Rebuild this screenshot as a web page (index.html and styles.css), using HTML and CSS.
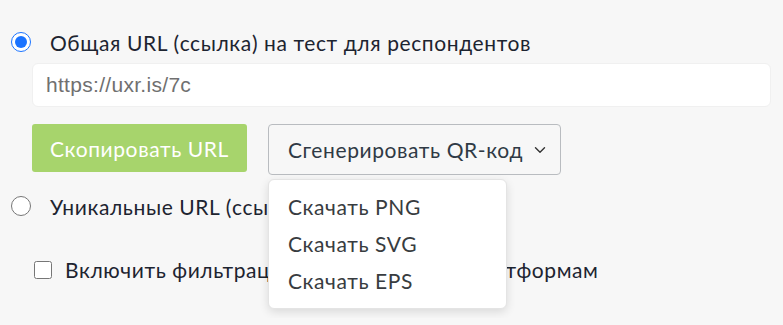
FILE: index.html
```html
<!DOCTYPE html>
<html lang="ru">
<head>
  <meta charset="UTF-8" />
  <title>Ссылка на тест</title>
  <link rel="stylesheet" href="styles.css">
</head>
<body>
<div class="share">
  <label class="option">
    <input type="radio" name="urlType" checked>
    <span>Общая URL (ссылка) на тест для респондентов</span>
  </label>
  <div class="url-block">
    <input class="url-input" type="text" value="https://uxr.is/7c" readonly>
    <div class="actions">
      <button class="btn-copy">Скопировать URL</button>
      <div class="qr">
        <button class="btn-qr">Сгенерировать QR-код
          <svg class="chevron" width="12" height="8" viewBox="0 0 12 8"><path d="M1.5 1.8 6 6.2l4.5-4.4" fill="none" stroke="#333" stroke-width="1.4" stroke-linecap="round" stroke-linejoin="round"/></svg>
        </button>
        <div class="qr-menu">
          <div class="qr-item">Скачать PNG</div>
          <div class="qr-item">Скачать SVG</div>
          <div class="qr-item">Скачать EPS</div>
        </div>
      </div>
    </div>
  </div>
  <label class="option option-second">
    <input type="radio" name="urlType">
    <span>Уникальные URL (ссылки)</span>
  </label>
  <label class="filter">
    <input type="checkbox">
    <span>Включить фильтрацию по браузерам и платформам</span>
  </label>
</div>
</body>
</html>
```
FILE: styles.css
```css
body {
  margin: 0;
  background-color: #f7f7f7;
  font-family: Lato, "Noto Sans", sans-serif;
  color: #1d2430;
}
.share {
  padding: 32px 12px 36px 11px;
}
.option {
  display: flex;
  align-items: center;
  gap: 19px;
  font-size: 21px;
  letter-spacing: 0.6px;
  height: 20px;
}
.option input {
  width: 20px;
  height: 20px;
  margin: 0;
  accent-color: #1a73ff;
}
.url-block {
  padding-left: 21px;
  margin-top: 11px;
}
.url-input {
  display: block;
  box-sizing: border-box;
  width: 739px;
  height: 44px;
  padding: 0 13px;
  border: 1px solid #f0f0f0;
  border-radius: 6px;
  background: #fff;
  font-family: "Liberation Sans", Arial, sans-serif;
  font-size: 21px;
  letter-spacing: 0.3px;
  color: #707070;
  outline: none;
}
.actions {
  display: flex;
  gap: 21px;
  margin-top: 17px;
}
.btn-copy {
  width: 215px;
  height: 48px;
  border: none;
  border-radius: 3px;
  background-color: #a7d46c;
  color: #fff;
  font-family: inherit;
  font-size: 21px;
  letter-spacing: 0.6px;
  cursor: pointer;
}
.qr {
  position: relative;
}
.btn-qr {
  display: flex;
  align-items: center;
  gap: 11px;
  height: 51px;
  padding: 0 14px 0 19px;
  border: 1px solid #b9bcc0;
  border-radius: 4px;
  background-color: #f7f7f7;
  color: #2f3a45;
  font-family: inherit;
  font-size: 21px;
  letter-spacing: 0.6px;
  cursor: pointer;
}
.qr-menu {
  position: absolute;
  top: 55px;
  left: 0;
  width: 239px;
  box-sizing: border-box;
  padding: 8px 0 9px;
  background: #fff;
  border: 1px solid #e4e4e4;
  border-radius: 6px;
  box-shadow: 0 3px 10px rgba(0, 0, 0, 0.12);
  z-index: 2;
}
.qr-item {
  padding: 0 19px;
  line-height: 37px;
  font-size: 21px;
  letter-spacing: 0.6px;
  color: #383c40;
}
.option-second {
  margin-top: 21px;
}
.filter {
  display: flex;
  align-items: center;
  gap: 13px;
  margin-top: 41px;
  padding-left: 23px;
  font-size: 21px;
  letter-spacing: 0.6px;
}
.filter input {
  width: 18px;
  height: 18px;
  margin: 0;
}
```
